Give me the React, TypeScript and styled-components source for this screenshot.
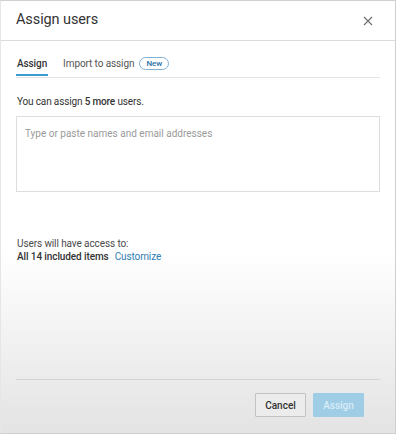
import React from 'react'
import styled, { createGlobalStyle } from 'styled-components'

const GlobalStyle = createGlobalStyle`
    html, body {
        margin: 0;
        padding: 0;
        background: #ffffff;
    }
    body {
        font-family: Roboto, "Noto Sans", sans-serif;
        color: #3c3c3c;
    }
`

const App = () => {
    return (
        <>
            <GlobalStyle />
            <Dialog>
                <Header>
                    <Title>Assign users</Title>
                    <CloseButton aria-label="Close">
                        <svg width="10" height="10" viewBox="0 0 10 10">
                            <path d="M1 1 L9 9 M9 1 L1 9" stroke="#707070" strokeWidth="1.2" fill="none" />
                        </svg>
                    </CloseButton>
                </Header>
                <Body>
                    <Tabs>
                        <Tab active>Assign</Tab>
                        <Tab>
                            Import to assign
                            <NewBadge>New</NewBadge>
                        </Tab>
                    </Tabs>
                    <Info>You can assign <b>5 more</b> users.</Info>
                    <Input placeholder="Type or paste names and email addresses" />
                    <Access>
                        <AccessLabel>Users will have access to:</AccessLabel>
                        <AccessRow>
                            <b>All 14 included items</b>
                            <Link>Customize</Link>
                        </AccessRow>
                    </Access>
                </Body>
                <Footer>
                    <Button>Cancel</Button>
                    <Button primary disabled>Assign</Button>
                </Footer>
            </Dialog>
        </>
    )
}

const Dialog = styled.div`
    width: 396px;
    height: 434px;
    box-sizing: border-box;
    border: 1px solid #cfcfcf;
    border-left-color: #e6e6e6;
    display: flex;
    flex-direction: column;
    background: linear-gradient(to bottom, #ffffff 0px, #ffffff 250px, #e3e3e3 434px);
`

const Header = styled.div`
    height: 39px;
    flex-shrink: 0;
    display: flex;
    align-items: center;
    justify-content: space-between;
    padding: 0 22px 0 15px;
    border-bottom: 1px solid #dcdcdc;
    background: #ffffff;
`

const Title = styled.h1`
    margin: 0;
    font-size: 14.5px;
    font-weight: 400;
    color: #333;
    padding-bottom: 2px;
    letter-spacing: -0.1px;
`

const CloseButton = styled.button`
    border: none;
    background: none;
    padding: 0;
    width: 10px;
    height: 10px;
    display: flex;
    margin-top: 1px;
`

const Body = styled.div`
    flex: 1;
    padding: 16px 15px 0 15px;
    display: flex;
    flex-direction: column;
`

const Tabs = styled.div`
    display: flex;
    gap: 14px;
    border-bottom: 1px solid #e4e4e4;
    height: 20px;
`

const Tab = styled.div<{ active?: boolean }>`
    display: flex;
    align-items: flex-start;
    gap: 5px;
    font-size: 10px;
    line-height: 14px;
    color: ${p => p.active ? '#333' : '#555'};
    font-weight: ${p => p.active ? 500 : 400};
    border-bottom: 2px solid ${p => p.active ? '#3e9bd0' : 'transparent'};
    height: 19px;
    box-sizing: border-box;
    padding: 0 1px;
    letter-spacing: -0.1px;
`

const NewBadge = styled.span`
    font-size: 8px;
    font-weight: 500;
    line-height: 11px;
    color: #2a6fa4;
    border: 1px solid #7fb0d6;
    border-radius: 7px;
    padding: 0 6px;
    margin-top: 0px;
`

const Info = styled.p`
    margin: 17px 0 0 1px;
    font-size: 10px;
    color: #333;
    line-height: 14px;
    letter-spacing: -0.15px;
    b { font-weight: 500; }
`

const Input = styled.textarea`
    margin-top: 7px;
    height: 76px;
    width: 364px;
    box-sizing: border-box;
    border: 1px solid #dedede;
    resize: none;
    padding: 11px 8px;
    font-family: inherit;
    font-size: 10px;
    outline: none;
    background: #fff;
    &::placeholder { color: #9a9a9a; }
`

const Access = styled.div`
    margin-top: 45px;
    font-size: 10px;
    line-height: 13px;
    padding-left: 1px;
    letter-spacing: -0.1px;
`

const AccessLabel = styled.div`
    color: #4a4a4a;
`

const AccessRow = styled.div`
    display: flex;
    gap: 6px;
    color: #333;
    b { font-weight: 500; }
`

const Link = styled.span`
    color: #2f7fb4;
`

const Footer = styled.div`
    margin: 0 15px;
    border-top: 1px solid #d4d4d4;
    height: 54px;
    flex-shrink: 0;
    display: flex;
    justify-content: flex-end;
    align-items: flex-start;
    padding: 13px 16px 0 0;
    gap: 7px;
    box-sizing: border-box;
`

const Button = styled.button<{ primary?: boolean }>`
    height: 24px;
    width: 51px;
    padding: 0;
    font-family: inherit;
    font-size: 10px;
    font-weight: 500;
    border-radius: 1px;
    border: 1px solid ${p => p.primary ? '#9fcde6' : '#c2c2c2'};
    background: ${p => p.primary ? '#9fcde6' : '#ececec'};
    color: ${p => p.primary ? '#d8ecf6' : '#333'};
`

export default App
